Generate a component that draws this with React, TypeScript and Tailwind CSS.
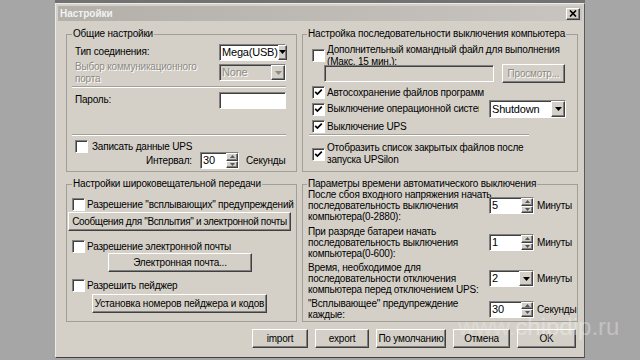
import React from "react";

const raised =
  "bg-[#d4d0c8] border border-t-white border-l-white border-r-[#404040] border-b-[#404040] shadow-[inset_-1px_-1px_0_#808080]";
const sunken =
  "border border-t-[#808080] border-l-[#808080] border-r-white border-b-white shadow-[inset_1px_1px_0_#404040]";
const grayText = "text-[#8d8a84] [text-shadow:1px_1px_0_#fff]";

function Check({ checked }: { checked?: boolean }) {
  return (
    <span className={`w-[13px] h-[13px] shrink-0 bg-white flex items-center justify-center ${sunken}`}>
      {checked && (
        <svg width="9" height="9" viewBox="0 0 9 9">
          <path d="M1.2 3.8 L3.4 6 L7.8 1.6" fill="none" stroke="#000" strokeWidth="1.7" />
        </svg>
      )}
    </span>
  );
}

function Arrow({ disabled }: { disabled?: boolean }) {
  return (
    <svg width="7" height="4" viewBox="0 0 7 4">
      <polygon points="0,0 7,0 3.5,4" fill={disabled ? "#8d8a84" : "#000"} />
    </svg>
  );
}

function Combo({ value, className, disabled }: { value: string; className: string; disabled?: boolean }) {
  return (
    <div className={`flex items-stretch ${sunken} ${disabled ? "bg-[#d4d0c8]" : "bg-white"} ${className}`}>
      <span className={`flex-1 pl-[2px] flex items-center leading-none text-[11px] ${disabled ? grayText : ""}`}>{value}</span>
      <span className={`w-[14px] flex items-center justify-center ${raised}`}>
        <Arrow disabled={disabled} />
      </span>
    </div>
  );
}

function Spin({ value, className }: { value: string; className: string }) {
  return (
    <div className={`flex items-stretch bg-white ${sunken} ${className}`}>
      <span className="flex-1 pl-[2px] flex items-center leading-none text-[11px]">{value}</span>
      <span className="w-[12px] flex flex-col">
        <span className={`flex-1 flex items-center justify-center ${raised}`}>
          <svg width="5" height="3" viewBox="0 0 5 3">
            <polygon points="0,3 5,3 2.5,0" fill="#555" />
          </svg>
        </span>
        <span className={`flex-1 flex items-center justify-center ${raised}`}>
          <svg width="5" height="3" viewBox="0 0 5 3">
            <polygon points="0,0 5,0 2.5,3" fill="#555" />
          </svg>
        </span>
      </span>
    </div>
  );
}

function Btn({ children, className, disabled }: { children: React.ReactNode; className: string; disabled?: boolean }) {
  return (
    <div className={`flex items-center justify-center whitespace-nowrap ${raised} ${disabled ? grayText : ""} ${className}`}>
      {children}
    </div>
  );
}

function Group({ title, children, legend }: { title: string; children: React.ReactNode; legend: string }) {
  return (
    <fieldset className="h-[144px] border border-[#a29f98] min-w-0">
      <legend className={`${legend} px-[1px] leading-[12px] whitespace-nowrap`}>{title}</legend>
      {children}
    </fieldset>
  );
}

function Sep({ className }: { className: string }) {
  return <div className={`h-[2px] border-t border-t-[#a29f98] border-b border-b-white ${className}`} />;
}

export default function App() {
  return (
    <div className="relative w-[640px] h-[360px] bg-[#a6a6a6] flex overflow-hidden font-['Liberation_Sans',Arial,sans-serif] text-[10px] tracking-[-0.2px] leading-[12px] text-black">
      <div className="w-[55px] shrink-0" />
      <div className="w-[530px] h-[358px] shrink-0 flex flex-col bg-[#d4d0c8] border-t-[3px] border-t-[#727272]">
        <div className="flex-1 flex flex-col p-[2px] border border-t-[#ecebe8] border-l-[#ecebe8] border-r-[#5a5a5a] border-b-[#404040]">
          {/* title bar */}
          <div className="h-[15px] flex items-center justify-between bg-linear-to-r from-[#b3afa9] to-[#c8c5c0] pl-[2px] pr-[2px]">
            <span className="font-bold text-[#f2f2f2] tracking-normal">Настройки</span>
            <span className={`w-[14px] h-[12px] flex items-center justify-center ${raised}`}>
              <svg width="8" height="7" viewBox="0 0 8 7">
                <path d="M1 0.5 L7 6.5 M7 0.5 L1 6.5" stroke="#000" strokeWidth="1.7" />
              </svg>
            </span>
          </div>

          <div className="pl-[8px] pr-[4px] pt-[7px] flex flex-col">
            <div className="grid grid-cols-[231px_276px] gap-x-[5px] gap-y-[6px]">
              {/* Общие настройки */}
              <Group title="Общие настройки" legend="ml-[5px]">
                <div className="pl-[8px] pr-[10px] flex flex-col">
                  <div className="mt-[4px] h-[16px] flex items-center justify-between">
                    <span>Тип соединения:</span>
                    <Combo value="Mega(USB)" className="w-[67px] h-[17px]" />
                  </div>
                  <div className="mt-[1px] h-[24px] flex items-start justify-between">
                    <span className={grayText}>
                      Выбор коммуникационного
                      <br />
                      порта
                    </span>
                    <Combo value="None" disabled className="w-[67px] h-[17px] mt-[3px]" />
                  </div>
                  <Sep className="mt-[1px] -ml-[3px]" />
                  <div className="mt-[4px] h-[16px] flex items-center justify-between">
                    <span>Пароль:</span>
                    <div className={`w-[67px] h-[17px] bg-white ${sunken}`} />
                  </div>
                  <Sep className="mt-[26px] -ml-[3px]" />
                  <div className="mt-[4px] h-[13px] flex items-center gap-[4px]">
                    <Check />
                    <span>Записать данные UPS</span>
                  </div>
                  <div className="-mt-[1px] h-[17px] flex items-center pl-[71px]">
                    <span className="w-[54px]">Интервал:</span>
                    <Spin value="30" className="w-[39px] h-[17px]" />
                    <span className="ml-[7px]">Секунды</span>
                  </div>
                </div>
              </Group>

              {/* Настройка последовательности */}
              <Group title="Настройка последовательности выключения компьютера" legend="ml-[4px]">
                <div className="pl-[9px] pr-[11px] flex flex-col">
                  <div className="mt-[4px] h-[24px] flex items-start gap-[2px]">
                    <span className="mt-[5px]">
                      <Check />
                    </span>
                    <span>
                      Дополнительный командный файл для выполнения
                      <br />
                      (Макс. 15 мин.):
                    </span>
                  </div>
                  <div className="-mt-[4px] h-[19px] flex items-center">
                    <div className={`ml-[12px] w-[170px] h-[17px] bg-[#d4d0c8] ${sunken}`} />
                    <Btn disabled className="ml-[8px] w-[63px] h-[19px]">
                      Просмотр...
                    </Btn>
                  </div>
                  <div className="mt-[3px] h-[13px] flex items-center gap-[2px]">
                    <Check checked />
                    <span>Автосохранение файлов программ</span>
                  </div>
                  <div className="mt-[1px] h-[18px] flex items-center justify-between">
                    <div className="flex items-center gap-[2px]">
                      <Check checked />
                      <span className="w-[152px] overflow-hidden whitespace-nowrap">Выключение операционной системы</span>
                    </div>
                    <Combo value="Shutdown" className="w-[77px] h-[18px]" />
                  </div>
                  <div className="mt-[2px] h-[13px] flex items-center gap-[2px]">
                    <Check checked />
                    <span>Выключение UPS</span>
                  </div>
                  <Sep className="mt-[1px] -ml-[3px] w-[220px]" />
                  <div className="mt-[6px] h-[24px] flex items-center gap-[2px]">
                    <Check checked />
                    <span>
                      Отобразить список закрытых файлов после
                      <br />
                      запуска UPSilon
                    </span>
                  </div>
                </div>
              </Group>

              {/* Настройки широковещательной передачи */}
              <Group title="Настройки широковещательной передачи" legend="ml-[5px]">
                <div className="pl-[5px] flex flex-col">
                  <div className="mt-[8px] h-[13px] flex items-center gap-[2px]">
                    <Check />
                    <span className="whitespace-nowrap">Разрешение "всплывающих" предупреждений</span>
                  </div>
                  <Btn className="mt-[1px] -ml-[4px] w-[223px] h-[19px] tracking-[-0.35px]">
                    Сообщения для "Всплытия" и электронной почты
                  </Btn>
                  <div className="mt-[9px] h-[13px] flex items-center gap-[2px]">
                    <Check />
                    <span>Разрешение электронной почты</span>
                  </div>
                  <Btn className="ml-[36px] w-[144px] h-[19px]">Электронная почта...</Btn>
                  <div className="mt-[7px] h-[13px] flex items-center gap-[2px]">
                    <Check />
                    <span>Разрешить пейджер</span>
                  </div>
                  <Btn className="mt-[2px] ml-[20px] w-[175px] h-[19px]">Установка номеров пейджера и кодов</Btn>
                </div>
              </Group>

              {/* Параметры времени */}
              <Group title="Параметры времени автоматического выключения" legend="ml-[4px]">
                <div className="pl-[5px] flex flex-col leading-[11px]">
                  <div className="-mt-[1px] h-[33px] flex items-center">
                    <span className="w-[181px] whitespace-nowrap">
                      После сбоя входного напряжения начать
                      <br />
                      последовательность выключения
                      <br />
                      компьютера(0-2880):
                    </span>
                    <Spin value="5" className="w-[45px] h-[17px]" />
                    <span className="ml-[3px]">Минуты</span>
                  </div>
                  <div className="mt-[4px] h-[33px] flex items-center">
                    <span className="w-[181px] whitespace-nowrap">
                      При разряде батареи начать
                      <br />
                      последовательность выключения
                      <br />
                      компьютера(0-600):
                    </span>
                    <Spin value="1" className="w-[45px] h-[17px]" />
                    <span className="ml-[3px]">Минуты</span>
                  </div>
                  <div className="mt-[3px] h-[33px] flex items-center">
                    <span className="w-[181px] whitespace-nowrap">
                      Время, необходимое для
                      <br />
                      последовательности отключения
                      <br />
                      компьютера перед отключением UPS:
                    </span>
                    <Combo value="2" className="w-[45px] h-[17px]" />
                    <span className="ml-[3px]">Минуты</span>
                  </div>
                  <div className="mt-[3px] h-[22px] flex items-center">
                    <span className="w-[181px] whitespace-nowrap">
                      "Всплывающее" предупреждение
                      <br />
                      каждые:
                    </span>
                    <Spin value="30" className="w-[45px] h-[17px]" />
                    <span className="ml-[3px]">Секунды</span>
                  </div>
                </div>
              </Group>
            </div>

            <div className="mt-[7px] mr-[2px] flex justify-end gap-[7px]">
              <Btn className="w-[56px] h-[19px]">import</Btn>
              <Btn className="w-[54px] h-[19px]">export</Btn>
              <Btn className="w-[70px] h-[19px]">По умолчанию</Btn>
              <Btn className="w-[57px] h-[19px]">Отмена</Btn>
              <Btn className="w-[59px] h-[19px]">OK</Btn>
            </div>
          </div>
        </div>
      </div>

      <div className="absolute left-[458px] top-[313px] text-[24px] leading-[28px] text-white pointer-events-none whitespace-nowrap tracking-normal">
        <span className="opacity-20">www.</span>
        <span className="opacity-30">chipdip.ru</span>
      </div>
    </div>
  );
}
